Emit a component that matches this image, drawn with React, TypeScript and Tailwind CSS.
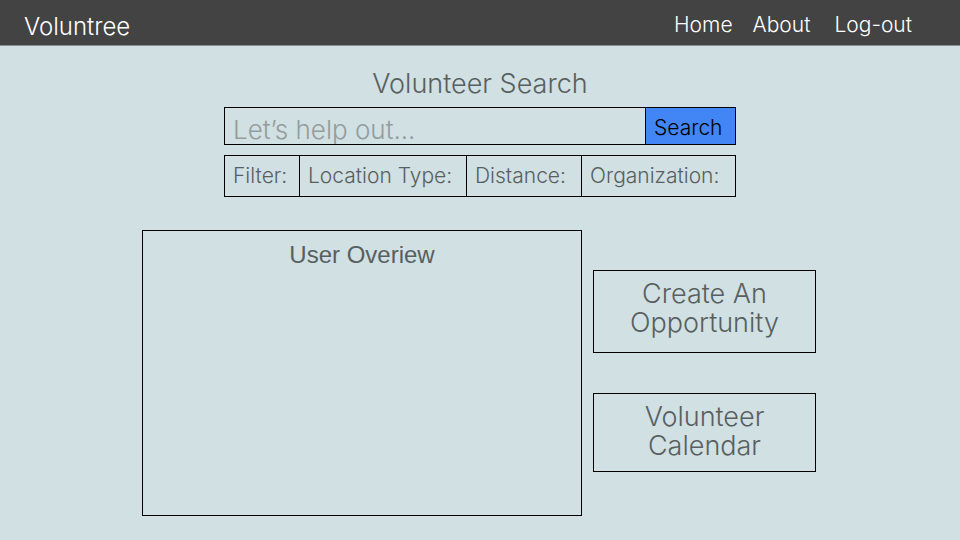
import React from "react";

const navLinks = [
  { label: "Home", spacing: "mr-5" },
  { label: "About", spacing: "mr-6" },
  { label: "Log-out", spacing: "" },
];

const filters = [
  { label: "Location Type:", width: "w-[167px]" },
  { label: "Distance:", width: "w-[115px]" },
  { label: "Organization:", width: "grow" },
];

function Header() {
  return (
    <header className="flex h-[46px] items-center justify-between border-b border-[#8a9091] bg-[#434343] pr-12 pl-6 text-white">
      <a href="#home" className="pt-2 text-[24px] leading-7">
        Voluntree
      </a>
      <nav aria-label="Main" className="flex pt-1 text-[21px] leading-7">
        {navLinks.map((link) => (
          <a key={link.label} href={"#" + link.label.toLowerCase()} className={link.spacing}>
            {link.label}
          </a>
        ))}
      </nav>
    </header>
  );
}

function SearchForm() {
  return (
    <form className="mx-auto mt-[23px] w-full max-w-lg" onSubmit={(event) => event.preventDefault()}>
      <h1 className="text-center text-[27px] leading-[30px]">
        <label htmlFor="search">Volunteer Search</label>
      </h1>
      <div className="mt-2 flex h-[38px] border border-black">
        <input
          id="search"
          type="search"
          placeholder="Let’s help out..."
          className="min-w-0 grow bg-transparent pt-2 pl-2 text-[26px] leading-7 outline-none placeholder:text-[#959c9d]"
        />
        <button type="submit" className="w-[90px] border-l border-black bg-[#4285f4] pt-1 pl-2 text-left text-[21px] leading-7 text-black">
          Search
        </button>
      </div>
      <div role="group" aria-labelledby="filter-label" className="mt-2.5 flex h-[42px] border border-black text-[21px] leading-7">
        <span id="filter-label" className="flex w-[74px] items-center pl-2">
          Filter:
        </span>
        {filters.map((filter) => (
          <button key={filter.label} type="button" className={"border-l border-black pl-2 text-left whitespace-nowrap " + filter.width}>
            {filter.label}
          </button>
        ))}
      </div>
    </form>
  );
}

export default function App() {
  return (
    <div className="min-h-screen bg-[#d0e0e3] font-['Inter',sans-serif] font-light text-[#595f60]">
      <Header />
      <main className="px-4 pb-6">
        <SearchForm />
        <div className="mx-auto mt-[33px] flex max-w-[676px] gap-[11px] pr-0.5">
          <section className="h-[286px] grow border border-black pt-2">
            <h2 className="text-center font-['Liberation_Sans',sans-serif] text-[24px] leading-8 font-normal">User Overiew</h2>
          </section>
          <div className="flex w-[223px] flex-col gap-10 pt-10 text-[27px] leading-[29px]">
            <button type="button" className="border border-black px-6 pt-2 pb-[15px]">
              Create An Opportunity
            </button>
            <button type="button" className="border border-black px-10 pt-2 pb-[11px]">
              Volunteer Calendar
            </button>
          </div>
        </div>
      </main>
    </div>
  );
}
